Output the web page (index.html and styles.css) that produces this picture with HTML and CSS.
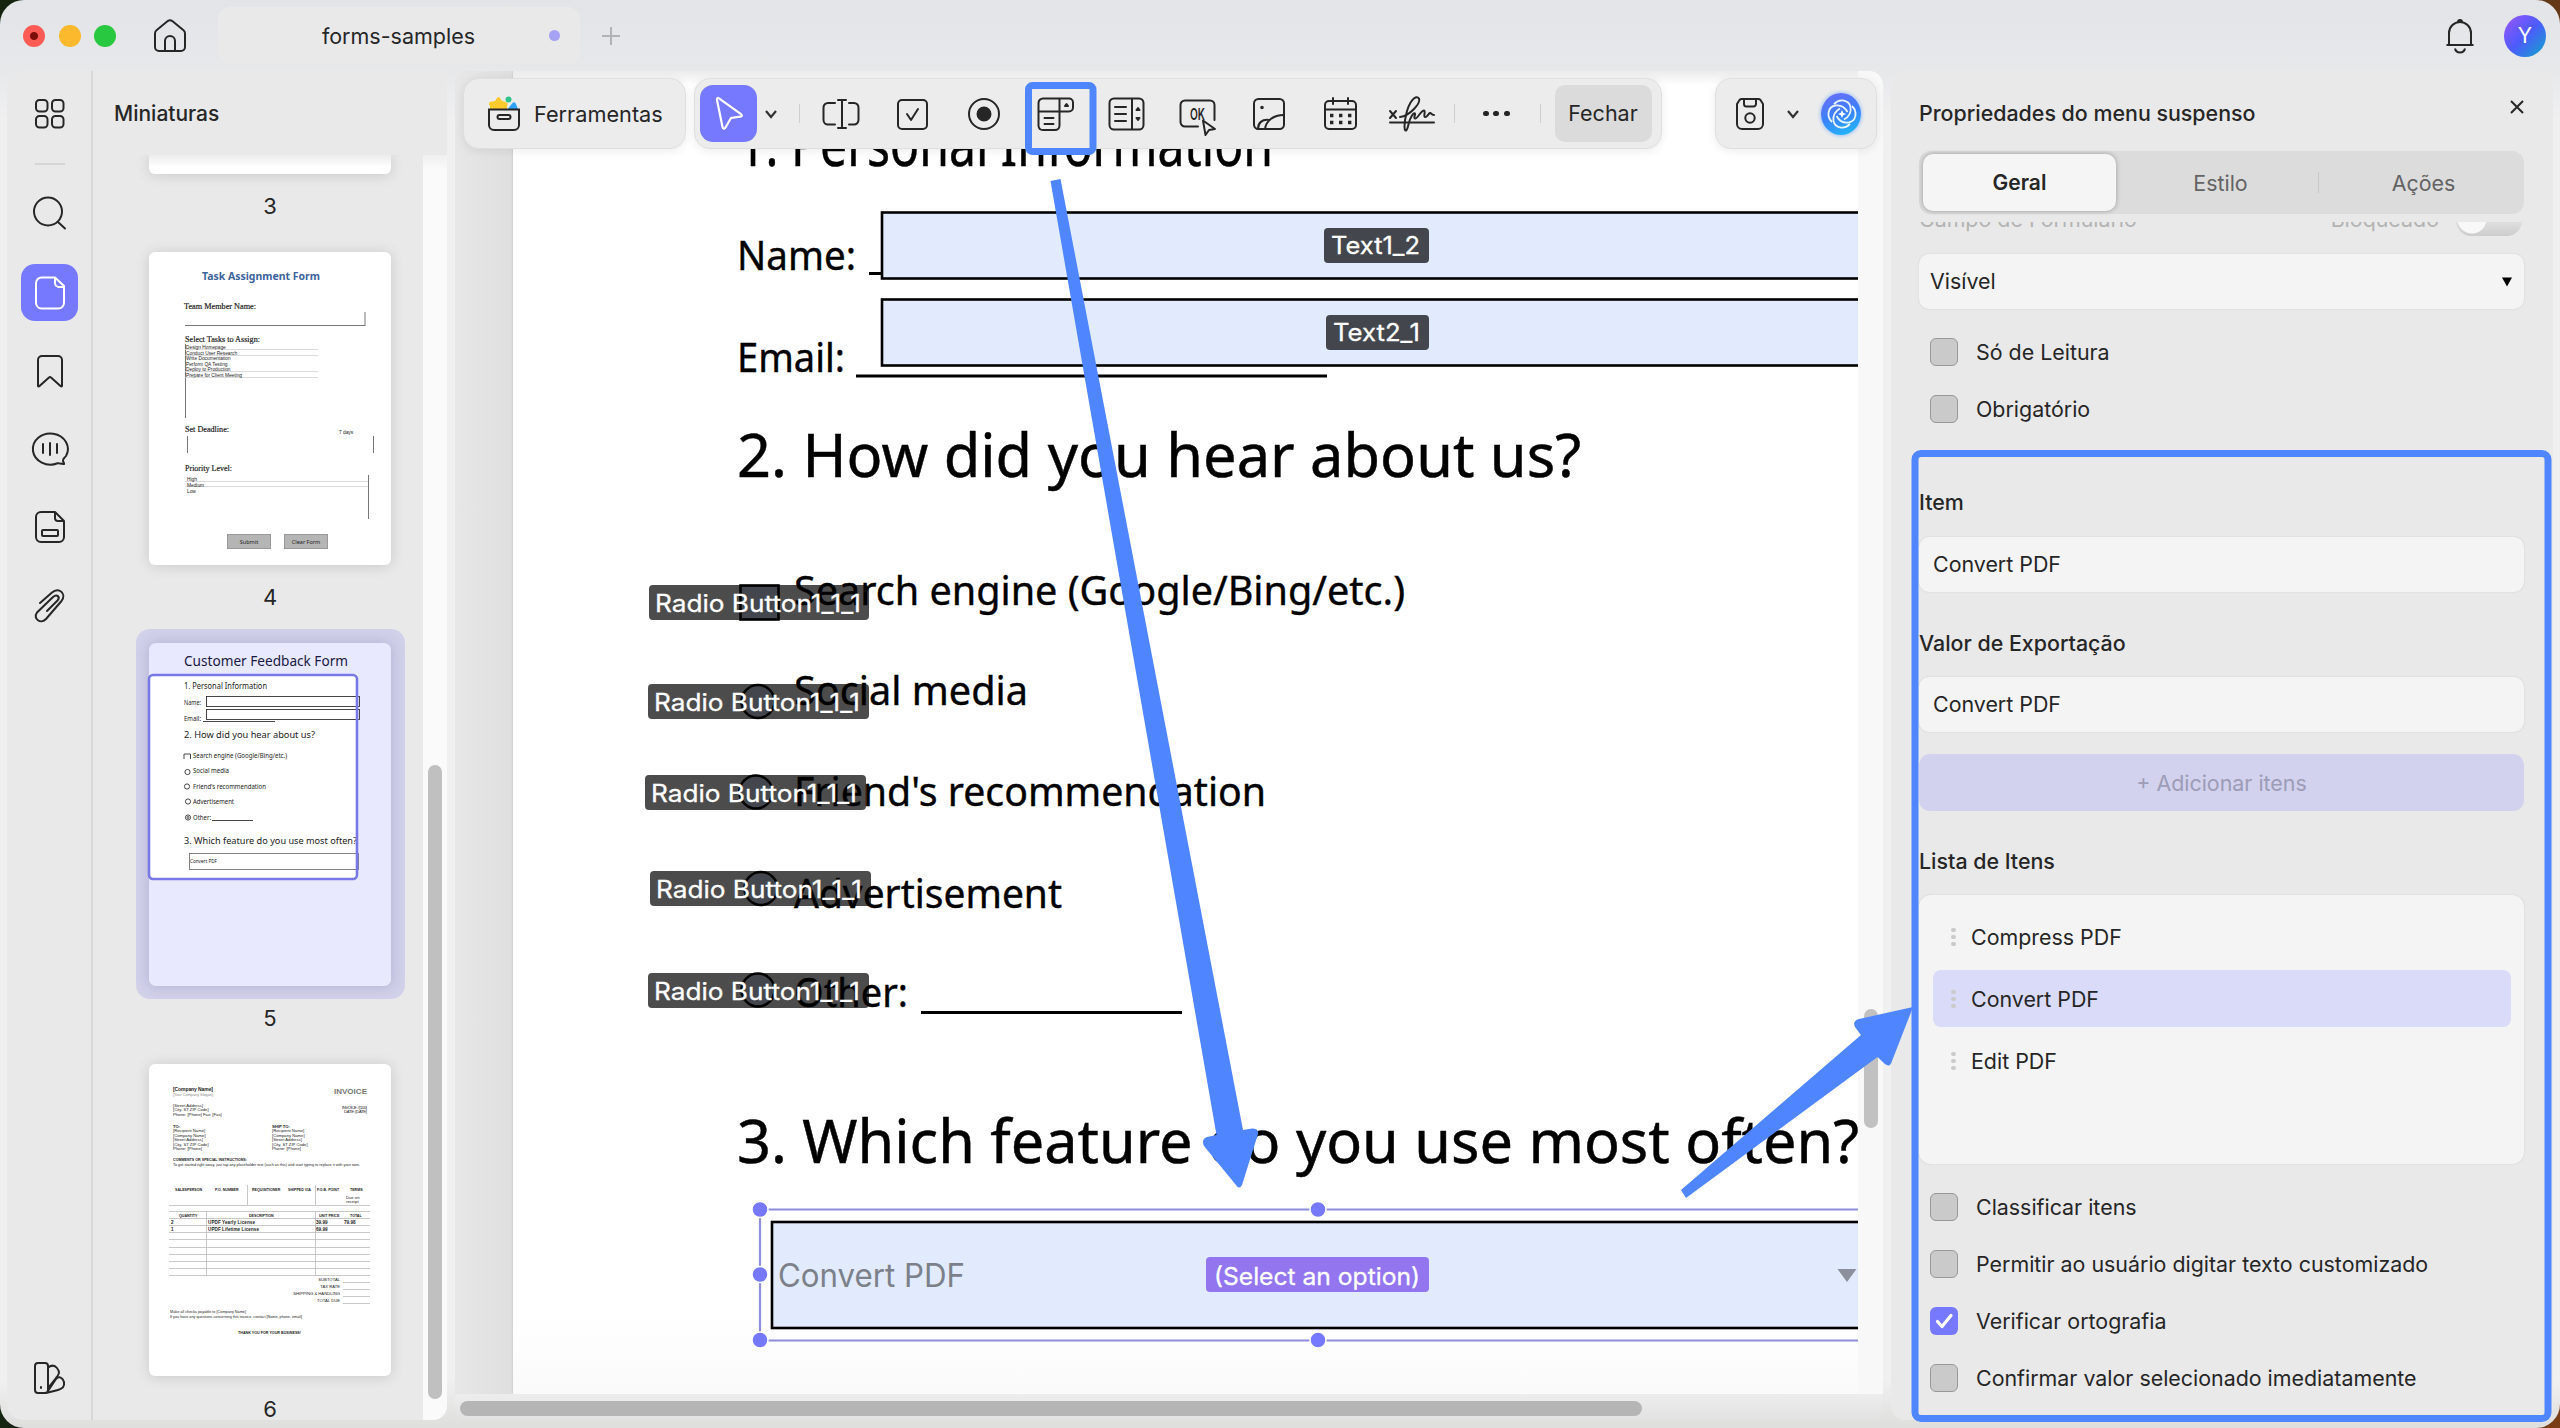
FILE: index.html
```html
<!DOCTYPE html>
<html lang="pt">
<head>
<meta charset="utf-8">
<title>forms-samples</title>
<link rel="stylesheet" href="styles.css">
</head>
<body>
<div class="window">
  <header class="titlebar">
    <div class="lights"><span class="light red"></span><span class="light amber"></span><span class="light green"></span></div>
    <svg class="home" width="34" height="34" viewBox="0 0 34 34"><path d="M2 14.500q0-2 1.500-3.200L15 1.800q2-1.300 4 0l11.500 9.500q1.500 1.200 1.500 3.200V28a4 4 0 0 1-4 4H6a4 4 0 0 1-4-4ZM12 32V22a5 5 0 0 1 10 0v10"/></svg>
    <div class="tab"><span class="tab-name">forms-samples</span><span class="tab-dot"></span></div>
    <svg class="plus" width="20" height="20" viewBox="0 0 20 20"><path d="M10 1v18M1 10h18"/></svg>
    <svg class="bell" width="30" height="36" viewBox="0 0 30 36"><path d="M4 27V15a11 11 0 0 1 22 0v12M1.500 27h27M10 30.500c1 5.200 9 5.200 10 0M13 4a2 2 0 1 1 4 0"/></svg>
    <div class="avatar">Y</div>
  </header>

  <div class="body">
    <nav class="rail">
      <svg class="ico" width="34" height="34" viewBox="0 0 34 34"><rect x="3" y="3" width="11.500" height="11.500" rx="3.500"/><rect x="19" y="3" width="11.500" height="11.500" rx="3.500"/><rect x="3" y="19" width="11.500" height="11.500" rx="3.500"/><rect x="19" y="19" width="11.500" height="11.500" rx="3.500"/></svg>
      <span class="rail-line"></span>
      <svg class="ico" width="34" height="34" viewBox="0 0 34 34"><circle cx="15" cy="15.500" r="14"/><path d="m25 26 7 6.500"/></svg>
      <span class="rail-active"><svg width="34" height="34" viewBox="0 0 34 34"><path d="M9 1.500h13L31 10v17a5.500 5.500 0 0 1-5.500 5.500H8.500A5.500 5.500 0 0 1 3 27V7a5.500 5.500 0 0 1 6-5.500ZM22 1.500V7a4 4 0 0 0 4 4h5"/></svg></span>
      <svg class="ico" width="34" height="34" viewBox="0 0 34 34"><path d="M5 32V6a4 4 0 0 1 4-4h16a4 4 0 0 1 4 4v26q-.5 1-1.500 0L18 23.500q-1-1-2 0L6.500 32q-1 1-1.500 0Z"/></svg>
      <svg class="ico" width="38" height="36" viewBox="0 0 38 36"><path d="M33 33c-3-.5-5-1-6.500-.8A17.500 15.500 0 1 1 35 25c-2 2.500-3.500 3-3 5 .3 1.200 1.500 1.800 1 3ZM12 13v9M19 12v12M26 13v9"/></svg>
      <svg class="ico" width="34" height="34" viewBox="0 0 34 34"><path d="M8 2h14l9 9v16a5 5 0 0 1-5 5H8a5 5 0 0 1-5-5V7a5 5 0 0 1 5-5ZM22 2v6a3 3 0 0 0 3 3h6"/><rect x="9" y="20" width="16" height="6" rx="1"/></svg>
      <svg class="ico" width="34" height="36" viewBox="0 0 34 36"><path d="M7 15 19 4.500c7-6 15 1.500 9.500 8.500L13 31c-5 5.500-13.500 0-9-6.500L20 9c4-3.500 7.500 0 4.500 3.500L14 23"/></svg>
      <svg class="ico rail-bottom" width="34" height="34" viewBox="0 0 34 34"><path d="M5 2h7a3 3 0 0 1 3 3v24a3 3 0 0 1-3 3H5a3 3 0 0 1-3-3V5a3 3 0 0 1 3-3ZM15 6.500c4-3 7-2 9 .5 3 4 2.500 6-1 10L15 27M15 30l8-12c3-3.500 7-1 8 3 .8 5-2 7-6 8L13 32M8 26v1"/></svg>
    </nav>

    <aside class="thumbs">
      <h2 class="thumbs-title">Miniaturas</h2>
      <div class="thumbs-scroll">
        <div class="thumbs-list">
          <div class="sheet sheet-3"></div>
          <p class="num">3</p>
          <div class="sheet sheet-4">
            <svg width="242" height="313" viewBox="0 0 242 313" class="mini">
              <text class="mini-title" x="53" y="28" textLength="118" lengthAdjust="spacingAndGlyphs">Task Assignment Form</text>
              <g class="serif">
                <text x="35" y="57" textLength="72" lengthAdjust="spacingAndGlyphs">Team Member Name:</text>
                <text x="36" y="90" textLength="75" lengthAdjust="spacingAndGlyphs">Select Tasks to Assign:</text>
                <text x="36" y="180" textLength="44" lengthAdjust="spacingAndGlyphs">Set Deadline:</text>
                <text x="36" y="219" textLength="47" lengthAdjust="spacingAndGlyphs">Priority Level:</text>
              </g>
              <path class="rule" d="M36 73.500H216M216 60v14M36.500 92v74M38.500 184v17M224.500 184v17M219.500 223v44"/>
              <path class="faint" d="M36 97.500H169M36 103.500H169M36 119.500H169M36 125.500H169M36 229.500H219M36 234.500H219"/>
              <g class="tiny">
                <text x="37" y="97">Design Homepage</text><text x="37" y="102.500">Conduct User Research</text><text x="37" y="108">Write Documentation</text><text x="37" y="113.500">Perform QA Testing</text><text x="37" y="119">Deploy to Production</text><text x="37" y="124.500">Prepare for Client Meeting</text>
                <text x="190" y="182">7 days</text>
                <text x="38" y="228.500">High</text><text x="38" y="234.500">Medium</text><text x="38" y="240.500">Low</text>
              </g>
              <rect class="btn" x="78.500" y="282.500" width="43" height="14"/><rect class="btn" x="135.500" y="282.500" width="43" height="14"/>
              <text class="btn-text" x="100" y="291.500">Submit</text><text class="btn-text" x="157" y="291.500">Clear Form</text>
            </svg>
          </div>
          <p class="num num-4">4</p>
          <div class="selected">
            <svg width="242" height="343" viewBox="0 0 242 343" class="mini">
              <rect width="242" height="343" rx="7" fill="#e8e8ff"/>
              <rect x="0" y="31" width="209" height="205" rx="3" fill="#fff"/>
              <text x="35" y="23" font-size="14.500" textLength="164" lengthAdjust="spacingAndGlyphs" fill="#1a1a44">Customer Feedback Form</text>
              <text x="35" y="46" font-size="8.200" textLength="83" lengthAdjust="spacingAndGlyphs">1. Personal Information</text>
              <g font-size="6.300">
                <text x="35" y="62" textLength="17" lengthAdjust="spacingAndGlyphs">Name:</text><text x="35" y="78" textLength="17" lengthAdjust="spacingAndGlyphs">Email:</text>
                <text x="44" y="115" textLength="94" lengthAdjust="spacingAndGlyphs">Search engine (Google/Bing/etc.)</text>
                <text x="44" y="130" textLength="36" lengthAdjust="spacingAndGlyphs">Social media</text>
                <text x="44" y="145.500" textLength="73" lengthAdjust="spacingAndGlyphs">Friend's recommendation</text>
                <text x="44" y="161" textLength="41" lengthAdjust="spacingAndGlyphs">Advertisement</text>
                <text x="44" y="176.500" textLength="18" lengthAdjust="spacingAndGlyphs">Other:</text>
              </g>
              <g font-size="9.400"><text x="35" y="94.500" textLength="131" lengthAdjust="spacingAndGlyphs">2. How did you hear about us?</text><text x="35" y="200.500" textLength="173" lengthAdjust="spacingAndGlyphs">3. Which feature do you use most often?</text></g>
              <g fill="none" stroke="#333" stroke-width=".9"><rect x="57.500" y="53.500" width="153" height="10"/><rect x="57.500" y="66.500" width="153" height="10"/><path d="M54 78.500H126M63 177.500H104M35 116v-5h6.500v5"/><circle cx="38.500" cy="129" r="2.600"/><circle cx="38" cy="143.500" r="2.600"/><circle cx="39" cy="158.500" r="2.600"/><circle cx="39" cy="174.500" r="2.600"/><circle cx="39" cy="174.500" r="1"/></g>
              <rect x="40.500" y="210.500" width="169" height="16" fill="none" stroke="#777" stroke-width=".9"/>
              <text x="41" y="220" font-size="4.500" textLength="27" lengthAdjust="spacingAndGlyphs">Convert PDF</text>
              <rect x="0" y="32" width="208" height="204" rx="4" fill="none" stroke="#7878e6" stroke-width="2.600"/>
            </svg>
          </div>
          <p class="num num-5">5</p>
          <div class="sheet sheet-6">
            <svg width="242" height="312" viewBox="0 0 242 312" class="mini invoice">
              <text x="24" y="26.500" class="b" font-size="5" textLength="40">[Company Name]</text><text x="24" y="31.500" fill="#888" textLength="40" lengthAdjust="spacingAndGlyphs">[Your Company Slogan]</text>
              <text x="185" y="29.500" class="b" font-size="8" fill="#777" textLength="33" lengthAdjust="spacingAndGlyphs">INVOICE</text>
              <text x="24" y="42.500">[Street Address]</text><text x="24" y="47">[City, ST ZIP Code]</text><text x="24" y="51.500">Phone: [Phone] Fax: [Fax]</text>
              <text x="193" y="44.500" textLength="25">INVOICE #[100]</text><text x="195" y="49" textLength="23">DATE: [DATE]</text>
              <text x="24" y="63.500" class="b">TO:</text><text x="24" y="68">[Recipient Name]</text><text x="24" y="72.500">[Company Name]</text><text x="24" y="77">[Street Address]</text><text x="24" y="81.500">[City, ST ZIP Code]</text><text x="24" y="86">Phone: [Phone]</text>
              <text x="123" y="63.500" class="b">SHIP TO:</text><text x="123" y="68">[Recipient Name]</text><text x="123" y="72.500">[Company Name]</text><text x="123" y="77">[Street Address]</text><text x="123" y="81.500">[City, ST ZIP Code]</text><text x="123" y="86">Phone: [Phone]</text>
              <text x="24" y="96.500" class="b" textLength="74" lengthAdjust="spacingAndGlyphs">COMMENTS OR SPECIAL INSTRUCTIONS:</text>
              <text x="24" y="101.500" textLength="187" lengthAdjust="spacingAndGlyphs">To get started right away, just tap any placeholder text (such as this) and start typing to replace it with your own.</text>
              <g class="b" font-size="3.600"><text x="26" y="127">SALESPERSON</text><text x="66" y="127">P.O. NUMBER</text><text x="103" y="127">REQUISITIONER</text><text x="139" y="127">SHIPPED VIA</text><text x="168" y="127">F.O.B. POINT</text><text x="201" y="127">TERMS</text></g>
              <text x="197" y="134.500">Due on</text><text x="197" y="139">receipt</text>
              <path d="M20 141.500H221M20 147.500H221M20 154.500H221M20 161.500H221M20 168.500H221M20 175.500H221M20 183.500H221M20 190.500H221M20 197.500H221M20 204.500H221M20 211.500H221M194 218.500H221M194 225.500H221M194 232.500H221M194 239.500H221M57.500 147V212M98.500 121V141M166.500 121V141M166.500 147V212" stroke="#bbb" stroke-width=".8"/>
              <g class="b" font-size="3.600"><text x="30" y="152.500">QUANTITY</text><text x="100" y="152.500">DESCRIPTION</text><text x="170" y="152.500">UNIT PRICE</text><text x="201" y="152.500">TOTAL</text></g>
              <g class="b" font-size="4.600"><text x="22" y="159.500">2</text><text x="59" y="159.500" textLength="47">UPDF Yearly License</text><text x="167" y="159.500">39.99</text><text x="195" y="159.500">79.98</text><text x="22" y="166.500">1</text><text x="59" y="166.500" textLength="51">UPDF Lifetime License</text><text x="167" y="166.500">69.99</text></g>
              <g text-anchor="end"><text x="191" y="217">SUBTOTAL</text><text x="191" y="224">TAX RATE</text><text x="191" y="231">SHIPPING &amp; HANDLING</text><text x="191" y="238">TOTAL DUE</text></g>
              <text x="21" y="249" textLength="76" lengthAdjust="spacingAndGlyphs">Make all checks payable to [Company Name]</text><text x="21" y="253.500" textLength="132" lengthAdjust="spacingAndGlyphs">If you have any questions concerning this invoice, contact [Name, phone, email]</text>
              <text x="89" y="269.500" class="b" textLength="63" lengthAdjust="spacingAndGlyphs">THANK YOU FOR YOUR BUSINESS!</text>
            </svg>
          </div>
          <p class="num num-6">6</p>
        </div>
        <div class="v-track"><span class="v-thumb"></span></div>
      </div>
    </aside>

    <main class="viewer">
      <div class="page">
        <svg class="doc" width="1345" height="1323" viewBox="513 71 1345 1323">
          <g class="doc-h">
            <text x="738" y="166" textLength="535" lengthAdjust="spacingAndGlyphs">1. Personal Information</text>
            <text x="737" y="477" textLength="844" lengthAdjust="spacingAndGlyphs">2. How did you hear about us?</text>
            <text x="737" y="1163" textLength="1122" lengthAdjust="spacingAndGlyphs">3. Which feature do you use most often?</text>
          </g>
          <g class="doc-p">
            <text x="737" y="270" textLength="119" lengthAdjust="spacingAndGlyphs">Name:</text>
            <text x="737" y="372" textLength="108" lengthAdjust="spacingAndGlyphs">Email:</text>
            <text x="794" y="604.500" textLength="611" lengthAdjust="spacingAndGlyphs">Search engine (Google/Bing/etc.)</text>
            <text x="794" y="705" textLength="234" lengthAdjust="spacingAndGlyphs">Social media</text>
            <text x="794" y="806" textLength="472" lengthAdjust="spacingAndGlyphs">Friend's recommendation</text>
            <text x="794" y="907.500" textLength="268" lengthAdjust="spacingAndGlyphs">Advertisement</text>
            <text x="794" y="1007" textLength="114" lengthAdjust="spacingAndGlyphs">Other:</text>
          </g>
          <path d="M869 273.500H884M856 376H1327M921 1012.500H1182" stroke="#000" stroke-width="3"/>
          <g class="field"><rect x="882" y="212.500" width="990" height="66"/><rect x="882" y="299.500" width="990" height="66"/><rect x="740.500" y="585.500" width="38" height="34"/><circle cx="758" cy="701.500" r="16.500"/><circle cx="756" cy="792" r="16.500"/><circle cx="761" cy="888.500" r="16.500"/><circle cx="758" cy="990" r="16.500"/><rect x="772" y="1222" width="1100" height="106"/></g>
          <g class="tag"><rect x="1324" y="228" width="105" height="35" rx="4"/><rect x="1326" y="315" width="103" height="35" rx="4"/><rect x="649" y="585" width="220" height="35" rx="4"/><rect x="648" y="684" width="221" height="35" rx="4"/><rect x="645" y="775" width="221" height="35" rx="4"/><rect x="650" y="871" width="221" height="35" rx="4"/><rect x="648" y="973" width="221" height="35" rx="4"/></g>
          <g class="tag-text">
            <text x="1331" y="254" textLength="89" lengthAdjust="spacingAndGlyphs">Text1_2</text><text x="1333" y="341" textLength="87" lengthAdjust="spacingAndGlyphs">Text2_1</text>
            <text x="655" y="611.500" textLength="206" lengthAdjust="spacingAndGlyphs">Radio Button1_1_1</text><text x="654" y="711" textLength="206" lengthAdjust="spacingAndGlyphs">Radio Button1_1_1</text><text x="651" y="802" textLength="206" lengthAdjust="spacingAndGlyphs">Radio Button1_1_1</text><text x="656" y="898" textLength="206" lengthAdjust="spacingAndGlyphs">Radio Button1_1_1</text><text x="654" y="1000" textLength="206" lengthAdjust="spacingAndGlyphs">Radio Button1_1_1</text>
          </g>
          <text class="choice" x="778" y="1287" textLength="187" lengthAdjust="spacingAndGlyphs">Convert PDF</text>
          <path d="M1837.500 1269h19l-9.500 13Z" fill="#8b909c"/>
          <path d="M1870 1209.500H760V1340.500H1870" fill="none" stroke="#8e8edc" stroke-width="2.200"/>
          <g class="handle"><circle cx="760" cy="1209.500" r="8"/><circle cx="1318" cy="1209.500" r="8"/><circle cx="760" cy="1274.500" r="8"/><circle cx="760" cy="1340" r="8"/><circle cx="1318" cy="1340" r="8"/></g>
          <rect x="1206" y="1257" width="223" height="35" rx="4" fill="#9275ef"/>
          <g class="tag-text"><text x="1214" y="1284.500" textLength="206" lengthAdjust="spacingAndGlyphs">(Select an option)</text></g>
        </svg>
      </div>
      <div class="viewer-track"><span class="viewer-thumb"></span></div>
      <div class="h-track"><span class="h-thumb"></span></div>

      <div class="toolbar">
        <div class="pill pill-tools">
          <svg width="34" height="36" viewBox="0 0 34 36"><path d="M3 14v-4q-3-4 2-4.500L8 5l2-3q1.500-2 3 0l2 3 3 .8q4 1 2 4.200v4Z" fill="#fdcb2e"/><circle cx="21.500" cy="3.500" r="3" fill="#2dc58d"/><path d="m20 14 5.500-7q1.500-1.500 3 0l3 7Z" fill="#2fa3f5"/><path class="s box" d="M2 13.500h30V29a5 5 0 0 1-5 5H7a5 5 0 0 1-5-5Z"/><rect class="s" x="10.500" y="19" width="13" height="4" rx="2"/></svg>
          <span>Ferramentas</span>
        </div>
        <div class="pill pill-main">
          <span class="cursor"><svg width="30" height="36" viewBox="0 0 30 36"><path d="M3 4c-.5-2 .8-2.500 2-1.500L27 18c1.500 1.500 1 2.500-.5 2.700L17 22l-5.500 9.500c-1 1.600-2.800 1.500-3-.5Z"/></svg></span>
          <svg class="chev" width="14" height="12" viewBox="0 0 14 12"><path d="m2 3 5 6 5-6"/></svg>
          <span class="tb-line"></span>
          <svg class="ico tb" viewBox="0 0 38 34"><path d="M13 6H6a4.500 4.500 0 0 0-4.500 4.500V23A4.500 4.500 0 0 0 6 27.500h7M27 6h5a4.500 4.500 0 0 1 4.500 4.500V23a4.500 4.500 0 0 1-4.500 4.500h-5M16 3h8M20 3v28M16 31h8"/></svg>
          <svg class="ico tb" viewBox="0 0 38 34"><rect x="5" y="3" width="29" height="29" rx="4"/><path d="m14 17 4 6 7-11"/></svg>
          <svg class="ico tb" viewBox="0 0 38 34"><circle cx="19" cy="17" r="15"/><circle cx="19" cy="17" r="6.500" class="fill"/></svg>
          <svg class="ico tb" viewBox="0 0 38 34"><path d="M7 1.500h26a4 4 0 0 1 4 4v5a4 4 0 0 1-4 4H2.500V6A4.500 4.500 0 0 1 7 1.500ZM2.500 14.500V29A4.500 4.500 0 0 0 7 33h12a4.500 4.500 0 0 0 4.500-4.500v-27M8.500 21h9M8.500 27h9"/><path class="fill" d="m29 9 1.500-2L32 9Z"/></svg>
          <svg class="ico tb" viewBox="0 0 38 34"><rect x="1.500" y="1.500" width="34" height="31" rx="4.500"/><path d="M24 2v30M7 10h11M7 17h11M7 24h11"/><path class="fill" d="m28.500 13 1.500-2 1.500 2ZM28.500 21l1.500 2 1.500-2Z"/></svg>
          <svg class="ico tb" viewBox="0 0 38 34"><path d="M19 29.500H6A4.500 4.500 0 0 1 1.500 25V8A4.500 4.500 0 0 1 6 3.500h25A4.500 4.500 0 0 1 35.500 8v15M24 23.500l2.500 14.500 3.500-5 6-1Z"/><text x="11" y="22.500" textLength="15" lengthAdjust="spacingAndGlyphs">OK</text></svg>
          <svg class="ico tb" viewBox="0 0 38 34"><rect x="4" y="2" width="30" height="30" rx="4.500"/><path d="M8 32c0-6 4-10 11-9M15 32c1-8 8-14 19-14"/><circle cx="12" cy="10.500" r=".8" class="fill"/></svg>
          <svg class="ico tb" viewBox="0 0 38 34"><path d="M7 4h23a4 4 0 0 1 4 4v20a4 4 0 0 1-4 4H7a4 4 0 0 1-4-4V8a4 4 0 0 1 4-4ZM3 12.500h31M11 1v6M26 1v6"/><path class="cal-dots" d="M8 18.500h22M8 25.500h22"/></svg>
          <svg class="ico tb sig" viewBox="0 0 46 38"><path d="m1 16 6 7M7 16l-6 7M1 27.500h44M11 22C21 21 32 8 30 3.500 27-1 20 6 17 20c-2 9-2 16 0 15.500 2-1 2-6 4-11 1.500-4 4-7 5-6s-2 4 0 5 6-8 9-8c2 .5-1 6 1 6.500s3-3 5-4c1.500-.3 1 2 4 2"/></svg>
          <span class="tb-line line-b"></span>
          <span class="dots"><i></i><i></i><i></i></span>
          <span class="tb-line line-c"></span>
          <span class="close-btn">Fechar</span>
        </div>
        <div class="pill pill-save">
          <svg class="ico" width="30" height="34" viewBox="0 0 30 34"><path d="M6.500 2h17q1 0 2 1l2.500 4v20a5 5 0 0 1-5 5H7a5 5 0 0 1-5-5V7l2.500-4q1-1 2-1ZM9 2v5a2.500 2.500 0 0 0 2.500 2.500h7A2.500 2.500 0 0 0 21 7V2"/><circle cx="15" cy="21" r="4.700"/></svg>
          <svg class="chev" width="14" height="12" viewBox="0 0 14 12"><path d="m2 3 5 6 5-6"/></svg>
          <span class="ai"><svg width="42" height="42" viewBox="0 0 42 42"><g fill="none" stroke="#e8f4ff" stroke-width="1.800"><path id="petal" d="M13 11C19 5 28 7 29.500 14c1 6-2 10-6.500 12.500"/><use href="#petal" transform="rotate(90 21 21)"/><use href="#petal" transform="rotate(180 21 21)"/><use href="#petal" transform="rotate(270 21 21)"/></g><path d="m21 17 1.200 2.800L25 21l-2.800 1.200L21 25l-1.200-2.800L17 21l2.800-1.200Z" fill="#fff"/></svg></span>
        </div>
      </div>
    </main>

    <aside class="props">
      <div class="props-head"><h2>Propriedades do menu suspenso</h2><svg width="14" height="14" viewBox="0 0 14 14"><path d="m1 1 12 12M13 1 1 13"/></svg></div>
      <div class="seg"><span class="seg-on">Geral</span><span class="seg-off">Estilo</span><i></i><span class="seg-off">Ações</span></div>
      <div class="clipped"><div class="clipped-row"><span>Campo de Formulário</span><span class="lock">Bloqueado</span><b class="switch"></b></div></div>
      <div class="select">Visível<svg width="10" height="10" viewBox="0 0 10 10"><path d="M0 .5h10L5 9.500Z"/></svg></div>
      <div class="checks first"><label class="check"><i></i>Só de Leitura</label><label class="check"><i></i>Obrigatório</label></div>
      <h3 class="h-item">Item</h3>
      <div class="input">Convert PDF</div>
      <h3 class="h-val">Valor de Exportação</h3>
      <div class="input">Convert PDF</div>
      <div class="add">+ Adicionar itens</div>
      <h3 class="h-list">Lista de Itens</h3>
      <ul class="items">
        <li><span class="grip"><i></i><i></i><i></i></span>Compress PDF</li>
        <li class="on"><span class="grip"><i></i><i></i><i></i></span>Convert PDF</li>
        <li><span class="grip"><i></i><i></i><i></i></span>Edit PDF</li>
      </ul>
      <div class="checks">
        <label class="check"><i></i>Classificar itens</label>
        <label class="check"><i></i>Permitir ao usuário digitar texto customizado</label>
        <label class="check"><i class="ticked"><svg width="28" height="28" viewBox="0 0 28 28"><path d="m7.500 14.500 4.500 5 9-11"/></svg></i>Verificar ortografia</label>
        <label class="check"><i></i>Confirmar valor selecionado imediatamente</label>
      </div>
    </aside>
  </div>

  <svg class="marks" width="2560" height="1428" viewBox="0 0 2560 1428">
    <rect x="1028.500" y="85.500" width="64.500" height="66" rx="4"/>
    <rect x="1915" y="453.500" width="633" height="965" rx="6"/>
    <path class="arrow" d="M1050.500 181 1060.500 179 1243 1130 1252 1128.500Q1259 1128.500 1258 1134L1242 1185Q1239 1190 1236 1185L1204 1146Q1201 1139 1207 1137L1216.500 1135Z"/>
    <path class="arrow" d="M1681 1190 1686 1198 1877.500 1057 1885 1064Q1890 1068 1892 1061L1913 1007 1859 1019Q1852 1021 1855 1027L1861 1035Z"/>
  </svg>
</div>
</body>
</html>
```
FILE: styles.css
```css
* { box-sizing: border-box; }
body { margin: 0; width: 2560px; height: 1428px; overflow: hidden; background: linear-gradient(100deg, #15240f, #1a2a1c 60%, #7a3d16); font-family: Inter, "Liberation Sans", sans-serif; font-size: 21.400px; color: #262626; }
h2, h3, p, ul { margin: 0; padding: 0; font-weight: 500; font-size: inherit; list-style: none; }
svg { display: block; flex: none; overflow: visible; }
.window { position: relative; width: 2560px; height: 1428px; border-radius: 24px; overflow: hidden; background: linear-gradient(#e2e4e7, #e7e8ea 70px, #f0f0f1 120px, #f0f0f0 1380px, #dededd); }

.titlebar { height: 71px; display: flex; align-items: center; padding: 0 14px 0 23px; }
.lights { display: flex; gap: 13.500px; }
.light { width: 22px; height: 22px; border-radius: 50%; }
.red { background: radial-gradient(circle, #7a0d08 3.500px, #fc5b55 4.500px); }
.amber { background: #fdb92e; }
.green { background: #28c840; }
.home { margin: 0 0 0 37px; fill: none; stroke: #262626; stroke-width: 2; }
.tab { margin: 0 0 0 31px; width: 362px; height: 57px; border-radius: 12px; background: #e9e9ea; display: grid; grid-template-columns: 1fr; align-items: center; font-size: 21.500px; }
.tab-name { grid-area: 1/1; text-align: center; padding-right: 1px; }
.tab-dot { grid-area: 1/1; justify-self: end; margin-right: 20px; width: 11px; height: 11px; border-radius: 50%; background: #a5a2f4; }
.plus { margin-left: 21px; fill: none; stroke: #b3b3b6; stroke-width: 2; }
.bell { margin-left: auto; fill: none; stroke: #262626; stroke-width: 2; }
.avatar { margin-left: 29px; width: 42px; height: 42px; border-radius: 50%; background: linear-gradient(135deg, #9d55fb, #4d5bfc 50%, #0da8c8); color: #fff; text-align: center; line-height: 42px; font-size: 21px; }

.body { display: flex; height: 1349px; padding: 0 7px; }
.ico { fill: none; stroke: #262626; stroke-width: 2; stroke-linejoin: round; stroke-linecap: round; }
.ico .fill { fill: #262626; stroke: #262626; }
.rail { width: 86px; border-right: 2px solid #d8d8d8; border-radius: 16px 0 0 16px; background: #e9e9e9; display: flex; flex-direction: column; align-items: center; padding-top: 26px; padding-left: 1px; }
.rail-line { width: 30px; height: 2px; background: #d5d5d5; margin: 32px 0 31px; }
.rail-active { width: 57px; height: 57px; border-radius: 14px; background: #7679fe; display: grid; place-items: center; margin: 34px 0 33px; }
.rail-active svg { fill: none; stroke: #fff; stroke-width: 2; }
.rail-active + .ico { margin-bottom: 43px; }
.rail-active + .ico + .ico { margin-bottom: 43px; }
.rail-active + .ico + .ico + .ico { margin-bottom: 44px; }
.rail-bottom { margin-top: auto; margin-bottom: 25px; }

.thumbs { width: 354px; background: #e9e9e9; overflow: hidden; border-radius: 0 0 14px 0; }
.thumbs-title { height: 84px; line-height: 86px; padding-left: 21px; font-size: 21px; }
.thumbs-scroll { display: flex; height: 1265px; }
.thumbs-list { width: 330px; padding-left: 24px; display: flex; flex-direction: column; align-items: center; overflow: hidden; }
.sheet { width: 242px; flex: none; border-radius: 6px; background: #fff; box-shadow: 0 1px 14px rgba(0,0,0,.14); }
.sheet-3 { height: 19px; border-radius: 0 0 6px 6px; background: linear-gradient(#ececec, #fff 12px); }
.sheet-4 { height: 313px; }
.sheet-6 { height: 312px; }
.num { height: 78px; line-height: 65px; flex: none; font-size: 22px; font-weight: 400; }
.num-4 { height: 64px; }
.num-5 { height: 65px; line-height: 39px; }
.num-6 { height: 44px; line-height: 66px; }
.selected { width: 269px; height: 370px; flex: none; padding: 14px 13px; border-radius: 14px; background: #d2d1ea; }
.selected svg { box-shadow: 0 0 14px rgba(70,70,130,.24); border-radius: 7px; }
.v-track { width: 24px; background: linear-gradient(#efefef, #fafafa 14px); }
.v-thumb { display: block; width: 14px; height: 634px; margin: 610px 0 0 5px; border-radius: 7px; background: #c0c0c0; }
.mini { font-family: "Noto Sans", sans-serif; fill: #222; }
.mini-title { font-size: 11px; font-weight: 700; fill: #3b639c; }
.serif { font-family: "Liberation Serif", serif; font-size: 8.500px; stroke: #222; stroke-width: .2; }
.tiny { font-family: "Liberation Sans", sans-serif; font-size: 4.800px; }
.rule { stroke: #777; stroke-width: 1; }
.faint { stroke: #ccc; stroke-width: .7; }
.btn { fill: #b5b5b5; stroke: #999; stroke-width: 1; }
.btn-text { font-size: 5.500px; text-anchor: middle; }
.invoice { font-family: "Liberation Sans", sans-serif; font-size: 4.200px; }
.b { font-weight: 700; }

.viewer { position: relative; width: 1428px; margin: 0 8px; display: grid; grid-template-columns: 58px 1345px 25px; grid-template-rows: 1323px 26px; background: linear-gradient(90deg, #e7e7e7, #dfdfdf 58px, #e9e9e9 59px); border-radius: 14px; overflow: hidden; }
.page { grid-column: 2; background: linear-gradient(#ebebeb, #fff 14px, #fff 1240px, #fafafa); box-shadow: 0 0 2px #bbb; }
.doc { font-family: "Noto Sans", "Open Sans", sans-serif; fill: #000; overflow: hidden; }
.doc-h { font-size: 61px; stroke: #000; stroke-width: .5; }
.doc-p { font-size: 40.500px; stroke: #000; stroke-width: .4; }
.field { fill: #e2ebfd; stroke: #000; stroke-width: 2.600; }
.tag { fill: #000; fill-opacity: .7; }
.tag-text { font-family: Inter, sans-serif; font-size: 24px; fill: #fff; stroke: #fff; stroke-width: .3; }
.choice { font-family: Inter, sans-serif; font-size: 32px; fill: #7b808b; }
.handle { fill: #7679fe; stroke: #fff; stroke-width: 1.500; }
.viewer-track { background: #f8f8f8; padding: 938px 0 0 6px; }
.viewer-thumb { display: block; width: 14px; height: 119px; border-radius: 7px; background: #c1c1c1; }
.h-track { grid-column: 1 / -1; background: linear-gradient(#ededed, #e2e2e2); padding: 7px 0 0 5px; }
.h-thumb { display: block; width: 1182px; height: 15px; border-radius: 8px; background: #b5b5b5; }

.toolbar { position: absolute; top: 7px; left: 8px; display: flex; height: 71px; }
.pill { height: 71px; border-radius: 16px; background: #ececec; border: 1px solid #dfdfdf; display: flex; align-items: center; box-shadow: 0 2px 10px rgba(0,0,0,.08); }
.pill-tools { width: 223px; padding-left: 23px; gap: 13px; font-size: 21.700px; line-height: 30px; }
.s { fill: none; stroke: #262626; stroke-width: 2; }
.s.box { fill: #ececec; }
.pill-main { width: 968px; margin-left: 8px; padding-left: 5px; }
.cursor { width: 57px; height: 57px; border-radius: 13px; background: #7679fe; display: grid; place-items: center; }
.cursor svg { fill: none; stroke: #fff; stroke-width: 2.200; }
.chev { margin-left: 7px; fill: none; stroke: #333; stroke-width: 2.200; }
.tb-line { width: 1px; height: 19px; background: #cfcfcf; margin: 0 22px 0 21px; }
.tb { width: 38px; height: 34px; margin-right: 33.400px; }
.tb text { font: 600 16px Inter, sans-serif; fill: #262626; stroke: none; }
.cal-dots { stroke-width: 3.400; stroke-dasharray: 3.400 5.600; stroke-linecap: butt; }
.sig { width: 46px; height: 38px; margin: 0 19px 0 -4px; }
.line-b { margin: 0 28px 0 0; }
.dots { display: flex; gap: 4.500px; }
.dots i { width: 5.800px; height: 5.800px; border-radius: 50%; background: #262626; }
.line-c { margin: 0 14px 0 30px; }
.close-btn { width: 97px; height: 57px; border-radius: 10px; background: #dbdbdb; text-align: center; line-height: 57px; font-size: 21.500px; }
.pill-save { width: 162px; margin-left: 53px; padding-left: 19px; }
.pill-save .chev { margin: 0 21px; }
.ai { width: 40px; height: 42px; border-radius: 50%; display: grid; place-items: center; background: linear-gradient(160deg, #6d6cfa, #3c80fb 50%, #1cc1f7); box-shadow: 0 0 4px #7aaefb; }

.props { width: 662px; background: #e9e9e9; border-radius: 14px; padding: 0 29px 0 28px; }
.props-head { height: 80px; display: flex; justify-content: space-between; padding-top: 29px; font-size: 21.400px; line-height: 27px; color: #262626; }
.props-head svg { fill: none; stroke: #262626; stroke-width: 2; }
.seg { height: 63px; border-radius: 12px; background: #dcdcdc; padding: 3px 3px 3px 4px; display: flex; align-items: center; }
.seg-on { width: 195px; height: 57px; line-height: 58px; border-radius: 10px; background: #f5f5f5; text-align: center; font-weight: 600; font-size: 21px; box-shadow: 0 0 5px rgba(0,0,0,.3); }
.seg-off { width: 204px; padding-left: 7px; text-align: center; color: #636363; }
.seg i { width: 1px; height: 21px; background: #c8c8c8; }
.clipped { height: 22px; overflow: hidden; margin-top: 8px; }
.clipped-row { height: 26px; margin-top: -16px; display: flex; line-height: 26px; color: #b4b4b4; }
.lock { margin-left: auto; margin-right: 17px; }
.switch { width: 66px; height: 31px; border-radius: 16px; margin: -1px 2px 0 0; background: radial-gradient(circle at 16px 14px, #f8f8f8 14px, transparent 15px), linear-gradient(#ddd 60%, #ccc); }
.select, .input { height: 55px; line-height: 55px; border-radius: 10px; background: #f4f4f4; box-shadow: 0 0 2px #ccc; }
.select { display: flex; align-items: center; justify-content: space-between; padding: 0 12px 0 11px; margin-top: 10px; }
.input { padding-left: 14px; }
.checks { padding: 14.500px 0 0 11px; }
.checks.first { height: 159px; }
.check { display: flex; align-items: center; height: 57px; gap: 18px; }
.check i { width: 28px; height: 28px; border-radius: 6px; border: 1.500px solid #989898; background: #cacaca; }
.check .ticked { border: 0; background: #7679fe; }
.ticked svg { fill: none; stroke: #fff; stroke-width: 3.200; stroke-linecap: round; stroke-linejoin: round; }
h3 { line-height: 26px; }
.h-item { margin: 21px 0 22px; }
.h-val { margin: 38px 0 21px; }
.add { margin-top: 22px; height: 57px; line-height: 58px; border-radius: 11px; background: #d2d2ee; color: #9d9cb6; text-align: center; }
.h-list { margin: 37px 0 21px; }
.items { height: 269px; border-radius: 12px; background: #f4f4f4; padding: 13px 13px 13px 14px; box-shadow: 0 0 2px #ccc; font-weight: 400; }
.items li { height: 57px; margin-bottom: 5px; border-radius: 8px; padding-left: 18px; display: flex; align-items: center; gap: 15px; }
.items .on { background: #dadbf8; }
.grip { display: grid; gap: 3px; }
.grip i { width: 5px; height: 4px; border-radius: 2px; background: #cacaca; }

.marks { position: absolute; top: 0; left: 0; }
.marks rect { fill: none; stroke: #4f85ff; stroke-width: 7; }
.arrow { fill: #4f85ff; }
```
